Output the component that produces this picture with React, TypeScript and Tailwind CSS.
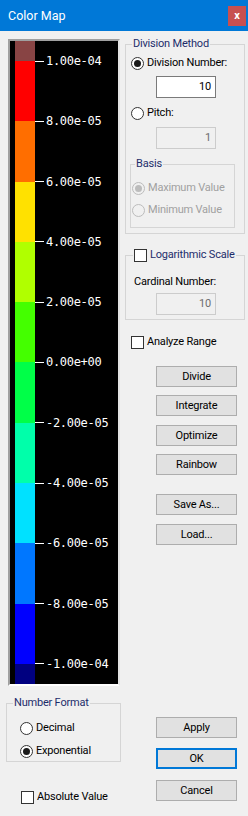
import React from "react";

const ui = { fontFamily: "Roboto, 'Liberation Sans', sans-serif" };
const mono = { fontFamily: "'DejaVu Sans Mono', 'Liberation Mono', monospace" };

// Colour bands between ticks, top to bottom
const bands = [
  "#ff0000",
  "#ff6e00",
  "#ffe100",
  "#b0ff00",
  "#44ff00",
  "#00ff48",
  "#00ffaa",
  "#00e1ff",
  "#0077ff",
  "#0000ff",
];

const labels = [
  "1.00e-04",
  "8.00e-05",
  "6.00e-05",
  "4.00e-05",
  "2.00e-05",
  "0.00e+00",
  "-2.00e-05",
  "-4.00e-05",
  "-6.00e-05",
  "-8.00e-05",
  "-1.00e-04",
];

function Radio({
  label,
  checked,
  disabled,
}: {
  label: string;
  checked?: boolean;
  disabled?: boolean;
}) {
  return (
    <div className="flex h-[14px] items-center gap-[3px] whitespace-nowrap">
      <span
        className={`flex h-[13px] w-[13px] shrink-0 items-center justify-center rounded-full border ${
          disabled ? "border-[#bcbcbc] bg-[#f0f0f0]" : "border-[#333333] bg-white"
        }`}
      >
        {checked && (
          <span
            className={`h-[7px] w-[7px] rounded-full ${
              disabled ? "bg-[#bcbcbc]" : "bg-[#1a1a1a]"
            }`}
          />
        )}
      </span>
      <span className={disabled ? "text-[#a0a0a0]" : "text-black"}>{label}</span>
    </div>
  );
}

function Check({ label, navy }: { label: string; navy?: boolean }) {
  return (
    <div className="flex h-[14px] items-center gap-[3px] whitespace-nowrap">
      <span className="h-[13px] w-[13px] shrink-0 border border-[#333333] bg-white" />
      <span className={navy ? "text-[#1d2d6b]" : "text-black"}>{label}</span>
    </div>
  );
}

function NumBox({ value, disabled }: { value: string; disabled?: boolean }) {
  return (
    <div
      className={`flex h-[22px] w-[60px] items-center justify-end border pr-[4px] ${
        disabled
          ? "border-[#cccccc] bg-[#f0f0f0] text-[#6d6d6d]"
          : "border-[#7a7a7a] bg-white text-black"
      }`}
    >
      {value}
    </div>
  );
}

function Button({ label, focused, className }: { label: string; focused?: boolean; className?: string }) {
  return (
    <div
      className={`ml-[31px] flex h-[21px] w-[81px] items-center justify-center bg-[#e1e1e1] text-black ${
        focused ? "border-2 border-[#0078d7]" : "border border-[#adadad]"
      } ${className ?? ""}`}
    >
      {label}
    </div>
  );
}

function ColorMap() {
  return (
    <div className="ml-[8px] mt-[8px] h-[647px] w-[112px] border-2 border-b-[#ffffff] border-l-[#a0a0a0] border-r-[#e3e3e3] border-t-[#a0a0a0] bg-black">
      <div className="flex h-full">
        {/* Bar */}
        <div className="ml-[5px] flex w-[20px] shrink-0 flex-col">
          <div className="h-[20px] shrink-0 bg-[#884444]" />
          {bands.map((c) => (
            <div key={c} className="h-[60.3px] shrink-0" style={{ backgroundColor: c }} />
          ))}
          <div className="h-[20px] shrink-0 bg-[#000080]" />
        </div>
        {/* Ticks + labels */}
        <div className="-mt-[10.15px] flex flex-col">
          {labels.map((l) => (
            <div key={l} className="flex h-[60.3px] shrink-0 items-center">
              <span className="h-px w-[9px] bg-white" />
              <span
                className="ml-[2px] text-[12px] leading-none tracking-[-0.3px] text-white"
                style={mono}
              >
                {l}
              </span>
            </div>
          ))}
        </div>
      </div>
    </div>
  );
}

export default function App() {
  return (
    <div
      className="flex h-[816px] w-[248px] flex-col bg-[#f0f0f0] text-[11px] leading-[14px] tracking-[-0.2px]"
      style={ui}
    >
      {/* Title bar */}
      <div className="flex h-[31px] shrink-0 items-center justify-between bg-[#0078d7] pl-[8px] pr-[2px]">
        <span className="text-[12.5px] tracking-normal text-white">Color Map</span>
        <span className="flex h-[20px] w-[18px] items-center justify-center bg-[#c75050] text-[11px] font-bold leading-none text-white">
          x
        </span>
      </div>

      <div className="flex">
        {/* Left column */}
        <div className="flex w-[125px] flex-col">
          <ColorMap />

          <fieldset className="ml-[6px] mt-[10px] w-[115px] border border-[#d5d5d5] pb-[3px]">
            <legend className="ml-[6px] px-[1px] text-[#1d2d6b]">Number Format</legend>
            <div className="ml-[13px] mt-[11px] flex flex-col gap-[9px]">
              <Radio label="Decimal" />
              <Radio label="Exponential" checked />
            </div>
          </fieldset>

          <div className="ml-[21px] mt-[28px]">
            <Check label="Absolute Value" />
          </div>
        </div>

        {/* Right column */}
        <div className="flex w-[123px] flex-col">
          <fieldset className="mt-[6px] w-[120px] border border-[#d5d5d5] pb-[5px]">
            <legend className="ml-[6px] px-[1px] text-[#1d2d6b]">Division Method</legend>
            <div className="ml-[5px] mt-[5px]">
              <Radio label="Division Number:" checked />
            </div>
            <div className="ml-[30px] mt-[6px]">
              <NumBox value="10" />
            </div>
            <div className="ml-[5px] mt-[8px]">
              <Radio label="Pitch:" />
            </div>
            <div className="ml-[30px] mt-[7px]">
              <NumBox value="1" disabled />
            </div>
            <fieldset className="ml-[4px] mt-[8px] w-[105px] border border-[#d5d5d5] pb-[10px]">
              <legend className="ml-[4px] px-[1px] text-[#1d2d6b]">Basis</legend>
              <div className="ml-[1px] mt-[10px] flex flex-col gap-[8px]">
                <Radio label="Maximum Value" checked disabled />
                <Radio label="Minimum Value" disabled />
              </div>
            </fieldset>
          </fieldset>

          <fieldset className="mt-[14px] w-[120px] border border-[#d5d5d5] pb-[4px]">
            <legend className="ml-[7px] px-[1px]">
              <Check label="Logarithmic Scale" navy />
            </legend>
            <div className="ml-[8px] mt-[13px] text-black">Cardinal Number:</div>
            <div className="ml-[30px] mt-[4px]">
              <NumBox value="10" disabled />
            </div>
          </fieldset>

          <div className="ml-[6px] mt-[15px]">
            <Check label="Analyze Range" />
          </div>

          <Button label="Divide" className="mt-[17px]" />
          <Button label="Integrate" className="mt-[8px]" />
          <Button label="Optimize" className="mt-[9px]" />
          <Button label="Rainbow" className="mt-[8px]" />
          <Button label="Save As..." className="mt-[19px]" />
          <Button label="Load..." className="mt-[9px]" />

          <Button label="Apply" className="mt-[172px]" />
          <Button label="OK" focused className="mt-[10px]" />
          <Button label="Cancel" className="mt-[11px]" />
        </div>
      </div>
    </div>
  );
}
